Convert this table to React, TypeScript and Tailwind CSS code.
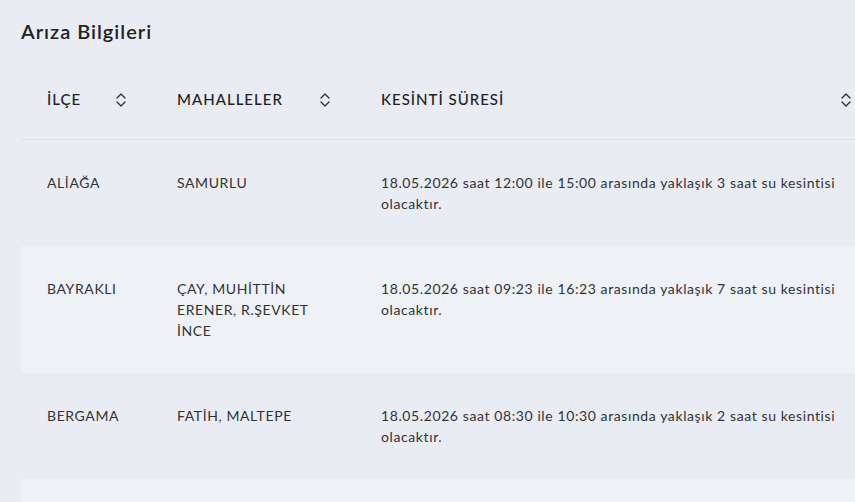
import React from "react";

const Sort = () => (
  <svg width="12" height="16" viewBox="0 0 12 16" fill="none" stroke="#333" strokeWidth="1.4" strokeLinecap="round" strokeLinejoin="round">
    <path d="M2 6 L6 2 L10 6" />
    <path d="M2 10 L6 14 L10 10" />
  </svg>
);

const rows = [
  { ilce: "ALİAĞA", mah: "SAMURLU", text: "18.05.2026 saat 12:00 ile 15:00 arasında yaklaşık 3 saat su kesintisi olacaktır.", light: false },
  { ilce: "BAYRAKLI", mah: "ÇAY, MUHİTTİN ERENER, R.ŞEVKET İNCE", text: "18.05.2026 saat 09:23 ile 16:23 arasında yaklaşık 7 saat su kesintisi olacaktır.", light: true },
  { ilce: "BERGAMA", mah: "FATİH, MALTEPE", text: "18.05.2026 saat 08:30 ile 10:30 arasında yaklaşık 2 saat su kesintisi olacaktır.", light: false },
  { ilce: "", mah: "", text: "", light: true },
];

export default function App() {
  return (
    <div className="w-[855px] h-[502px] overflow-hidden bg-[#e9ecf3] text-[#333]" style={{ fontFamily: "Lato, 'Noto Sans', sans-serif" }}>
      <div className="pl-[21px] pt-[17px]">
        <h1 className="text-[20px] leading-[28px] font-semibold tracking-[1px] text-[#222]">Arıza Bilgileri</h1>
        <div className="mt-[15px] w-[855px]">
          <div className="grid grid-cols-[130px_204px_521px] h-[80px] border-b border-[#dde1e9] text-[15px] font-medium tracking-[1px] text-[#222]">
            <div className="flex items-center justify-between pl-[26px] pr-[24px]">
              <span>İLÇE</span>
              <Sort />
            </div>
            <div className="flex items-center justify-between pl-[26px] pr-[24px]">
              <span>MAHALLELER</span>
              <Sort />
            </div>
            <div className="flex items-center justify-between pl-[26px] pr-[24px]">
              <span>KESİNTİ SÜRESİ</span>
              <Sort />
            </div>
          </div>
          {rows.map((r, i) => (
            <div key={i} className={`grid grid-cols-[130px_204px_521px] text-[14px] leading-[21px] tracking-[0.6px] ${r.light ? "bg-[#eef1f6]" : ""}`}>
              <div className="pl-[26px] pr-[20px] pt-[32px] pb-[32px]">{r.ilce}</div>
              <div className="pl-[26px] pr-[20px] pt-[32px] pb-[32px]">{r.mah}</div>
              <div className="pl-[26px] pr-[24px] pt-[32px] pb-[32px] min-h-[106px]">{r.text}</div>
            </div>
          ))}
        </div>
      </div>
    </div>
  );
}
